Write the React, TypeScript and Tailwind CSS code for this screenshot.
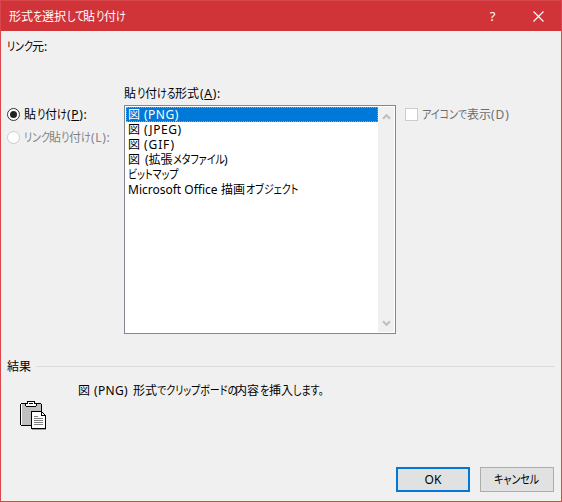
import type { ReactNode } from 'react';

interface TextRunProps {
  children: ReactNode;
  className?: string;
}

// A single line of dialog text with proportional kana
function TextRun({ children, className = '' }: TextRunProps) {
  return (
    <span
      className={`flex whitespace-pre font-['Noto_Sans','Noto_Sans_CJK_JP',sans-serif] text-[12px] leading-[15px] [font-feature-settings:'palt'] ${className}`}
    >
      {children}
    </span>
  );
}

// Condensed kana, the width class is the advance of the whole run
function Kana({ children, className }: { children: string; className: string }) {
  return (
    <span className={`block shrink-0 ${className}`}>
      <span className="inline-block origin-left scale-x-[0.83]">{children}</span>
    </span>
  );
}

// Access key in brackets, e.g. (P):
function AccessKey({ letter, underline }: { letter: string; underline?: boolean }) {
  return (
    <span className="pl-px tracking-[0.7px]">
      ({underline ? <u>{letter}</u> : letter}):
    </span>
  );
}

const FORMATS = [
  { id: 'png', content: <><span className="w-4">図</span><span className="tracking-[0.5px]">(PNG)</span></> },
  { id: 'jpeg', content: <><span className="w-4">図</span><span className="tracking-[0.6px]">(JPEG)</span></> },
  { id: 'gif', content: <><span className="w-4">図</span><span className="tracking-[0.9px]">(GIF)</span></> },
  {
    id: 'emf',
    content: (
      <>
        <span className="w-4">図</span>
        <span className="w-[29px] pl-px">(拡張</span>
        <Kana className="w-[51px]">メタファイル</Kana>
        <span>)</span>
      </>
    ),
  },
  { id: 'bitmap', content: <Kana className="w-[48px]">ビットマップ</Kana> },
  {
    id: 'office',
    content: (
      <>
        <span className="w-[93px]">Microsoft Office</span>
        <span className="w-[25px]">描画</span>
        <Kana className="w-[51px]">オブジェクト</Kana>
      </>
    ),
  },
];

function TitleBar() {
  return (
    <div className="flex h-[30px] shrink-0 items-center bg-[#d13438] pl-2 text-white">
      <TextRun>
        <span className="w-6">形式</span>
        <Kana className="w-[9px]">を</Kana>
        <span className="w-[25px]">選択</span>
        <Kana className="w-4">して</Kana>
        <span className="w-[13px]">貼</span>
        <Kana className="w-2">り</Kana>
        <span className="w-3">付</span>
        <Kana className="w-[9px]">け</Kana>
      </TextRun>
      <div className="ml-auto flex h-full items-center">
        <span className="flex w-[45px] justify-center font-['Noto_Sans',sans-serif] text-[13px] leading-[15px]">?</span>
        <span className="flex w-[46px] justify-center">
          <svg width="11" height="11" viewBox="0 0 11 11" stroke="white" strokeWidth="1.1">
            <path d="M0.5 0.5L10.5 10.5M10.5 0.5L0.5 10.5" />
          </svg>
        </span>
      </div>
    </div>
  );
}

function ScrollArrow({ down }: { down?: boolean }) {
  return (
    <svg width="9" height="7" viewBox="0 0 9 7" fill="none" stroke="#bfbfbf" strokeWidth="2">
      <path d={down ? 'M1 1.2L4.5 4.8L8 1.2' : 'M1 5.8L4.5 2.2L8 5.8'} />
    </svg>
  );
}

function FormatList() {
  return (
    <div className="flex h-[229px] w-[272px] border border-[#828790] bg-white">
      <div className="min-w-0 flex-1 pl-px pt-px">
        {FORMATS.map((format, idx) => (
          <div
            key={format.id}
            className={
              idx === 0
                ? 'flex h-[15px] items-center bg-[#0078d7] pl-[2px] text-white outline-1 -outline-offset-1 outline-dotted outline-[#ff8728]'
                : 'flex h-[15px] items-center pl-[2px]'
            }
          >
            <TextRun>{format.content}</TextRun>
          </div>
        ))}
      </div>
      <div className="my-px mr-px flex w-4 flex-col items-center justify-between bg-[#f0f0f0] pb-[5px] pt-[6px]">
        <ScrollArrow />
        <ScrollArrow down />
      </div>
    </div>
  );
}

function ClipboardIcon() {
  return (
    <svg width="27" height="29" viewBox="0 0 27 29" shapeRendering="crispEdges">
      <path d="M1 2H21V3H22V25H1V24H0V3H1Z" fill="#000" />
      <path d="M1 3H21V24H1Z" fill="#c0c0c0" />
      <path d="M1 3H2V24H1Z" fill="#fff" />
      <path d="M7 0H15V2H17V5H16V6H6V5H5V2H7Z" fill="#000" />
      <path d="M8 1H14V3H16V5H6V3H8Z" fill="#fff" />
      <path d="M9 2H13V3H9Z" fill="#000" />
      <path d="M11 10H22V11H23V12H24V13H25V14H26V28H11Z" fill="#000" />
      <path d="M12 11H21V15H25V27H12Z" fill="#fff" />
      <path d="M22 12H23V13H24V14H22Z" fill="#fff" />
      <path d="M14 15H18V16H14ZM14 17H23V18H14ZM14 19H23V20H14ZM14 21H23V22H14ZM14 23H23V24H14Z" fill="#808080" />
      <path d="M12 28H26V29H12Z" fill="#a0a0a0" />
    </svg>
  );
}

export default function App() {
  return (
    <div className="flex h-[502px] w-[562px] flex-col overflow-hidden border border-[#d9464c] bg-[#f0f0f0] text-black">
      <TitleBar />

      <div className="h-[55px] pl-[6px] pt-2">
        <TextRun>
          <Kana className="w-[25px]">リンク</Kana>
          <span>元:</span>
        </TextRun>
      </div>

      {/* Paste mode, format list and icon option */}
      <div className="flex h-[248px]">
        <div className="w-[123px] pl-[6px] pt-[21px]">
          <div className="flex h-[15px] items-center gap-1">
            <span className="flex size-[13px] items-center justify-center rounded-full border border-[#333] bg-white">
              <span className="size-[7px] rounded-full bg-[#222]" />
            </span>
            <TextRun>
              <span className="w-[13px]">貼</span>
              <Kana className="w-2">り</Kana>
              <span className="w-3">付</span>
              <Kana className="w-[9px]">け</Kana>
              <AccessKey letter="P" underline />
            </TextRun>
          </div>
          <div className="mt-2 flex h-[15px] items-center gap-1 text-[#838383]">
            <span className="size-[13px] rounded-full border border-[#ccc] bg-white" />
            <TextRun>
              <Kana className="w-[25px]">リンク</Kana>
              <span className="w-[12px]">貼</span>
              <Kana className="w-2">り</Kana>
              <span className="w-3">付</span>
              <Kana className="w-[9px]">け</Kana>
              <AccessKey letter="L" />
            </TextRun>
          </div>
        </div>
        <div className="w-[272px]">
          <TextRun className="h-[19px]">
            <span className="w-[13px]">貼</span>
            <Kana className="w-2">り</Kana>
            <span className="w-3">付</span>
            <Kana className="w-[18px]">ける</Kana>
            <span className="w-6">形式</span>
            <AccessKey letter="A" underline />
          </TextRun>
          <FormatList />
        </div>
        <div className="mt-[21px] flex h-[15px] items-center gap-1 pl-[9px] text-[#6d6d6d]">
          <span className="size-[13px] border border-[#ccc] bg-white" />
          <TextRun>
            <Kana className="w-[45px]">アイコンで</Kana>
            <span className="w-6">表示</span>
            <span className="tracking-[1px]">(D)</span>
          </TextRun>
        </div>
      </div>

      {/* Result */}
      <div className="mt-[25px] flex h-[15px] items-center gap-[5px] pl-[6px] pr-[6px]">
        <TextRun className="w-6">結果</TextRun>
        <span className="h-px flex-1 bg-[#dcdcdc]" />
      </div>
      <div className="flex h-[93px]">
        <div className="w-[77px] pl-[19px] pt-[27px]">
          <ClipboardIcon />
        </div>
        <div className="pt-[9px]">
          <TextRun>
            <span className="w-4">図</span>
            <span className="w-[39px] tracking-[0.3px]">(PNG)</span>
            <span className="w-6">形式</span>
            <Kana className="w-[78px]">でクリップボードの</Kana>
            <span className="w-[25px]">内容</span>
            <Kana className="w-[9px]">を</Kana>
            <span className="w-6">挿入</span>
            <Kana className="w-9">します。</Kana>
          </TextRun>
        </div>
      </div>

      <div className="flex gap-[10px] pl-[395px]">
        <button className="flex h-[25px] w-[74px] items-center justify-center border-2 border-[#0078d7] bg-[#e1e1e1]">
          <TextRun>OK</TextRun>
        </button>
        <button className="flex h-[25px] w-[74px] items-center justify-center border border-[#adadad] bg-[#e1e1e1]">
          <TextRun>
            <Kana className="w-[47px]">キャンセル</Kana>
          </TextRun>
        </button>
      </div>
    </div>
  );
}
